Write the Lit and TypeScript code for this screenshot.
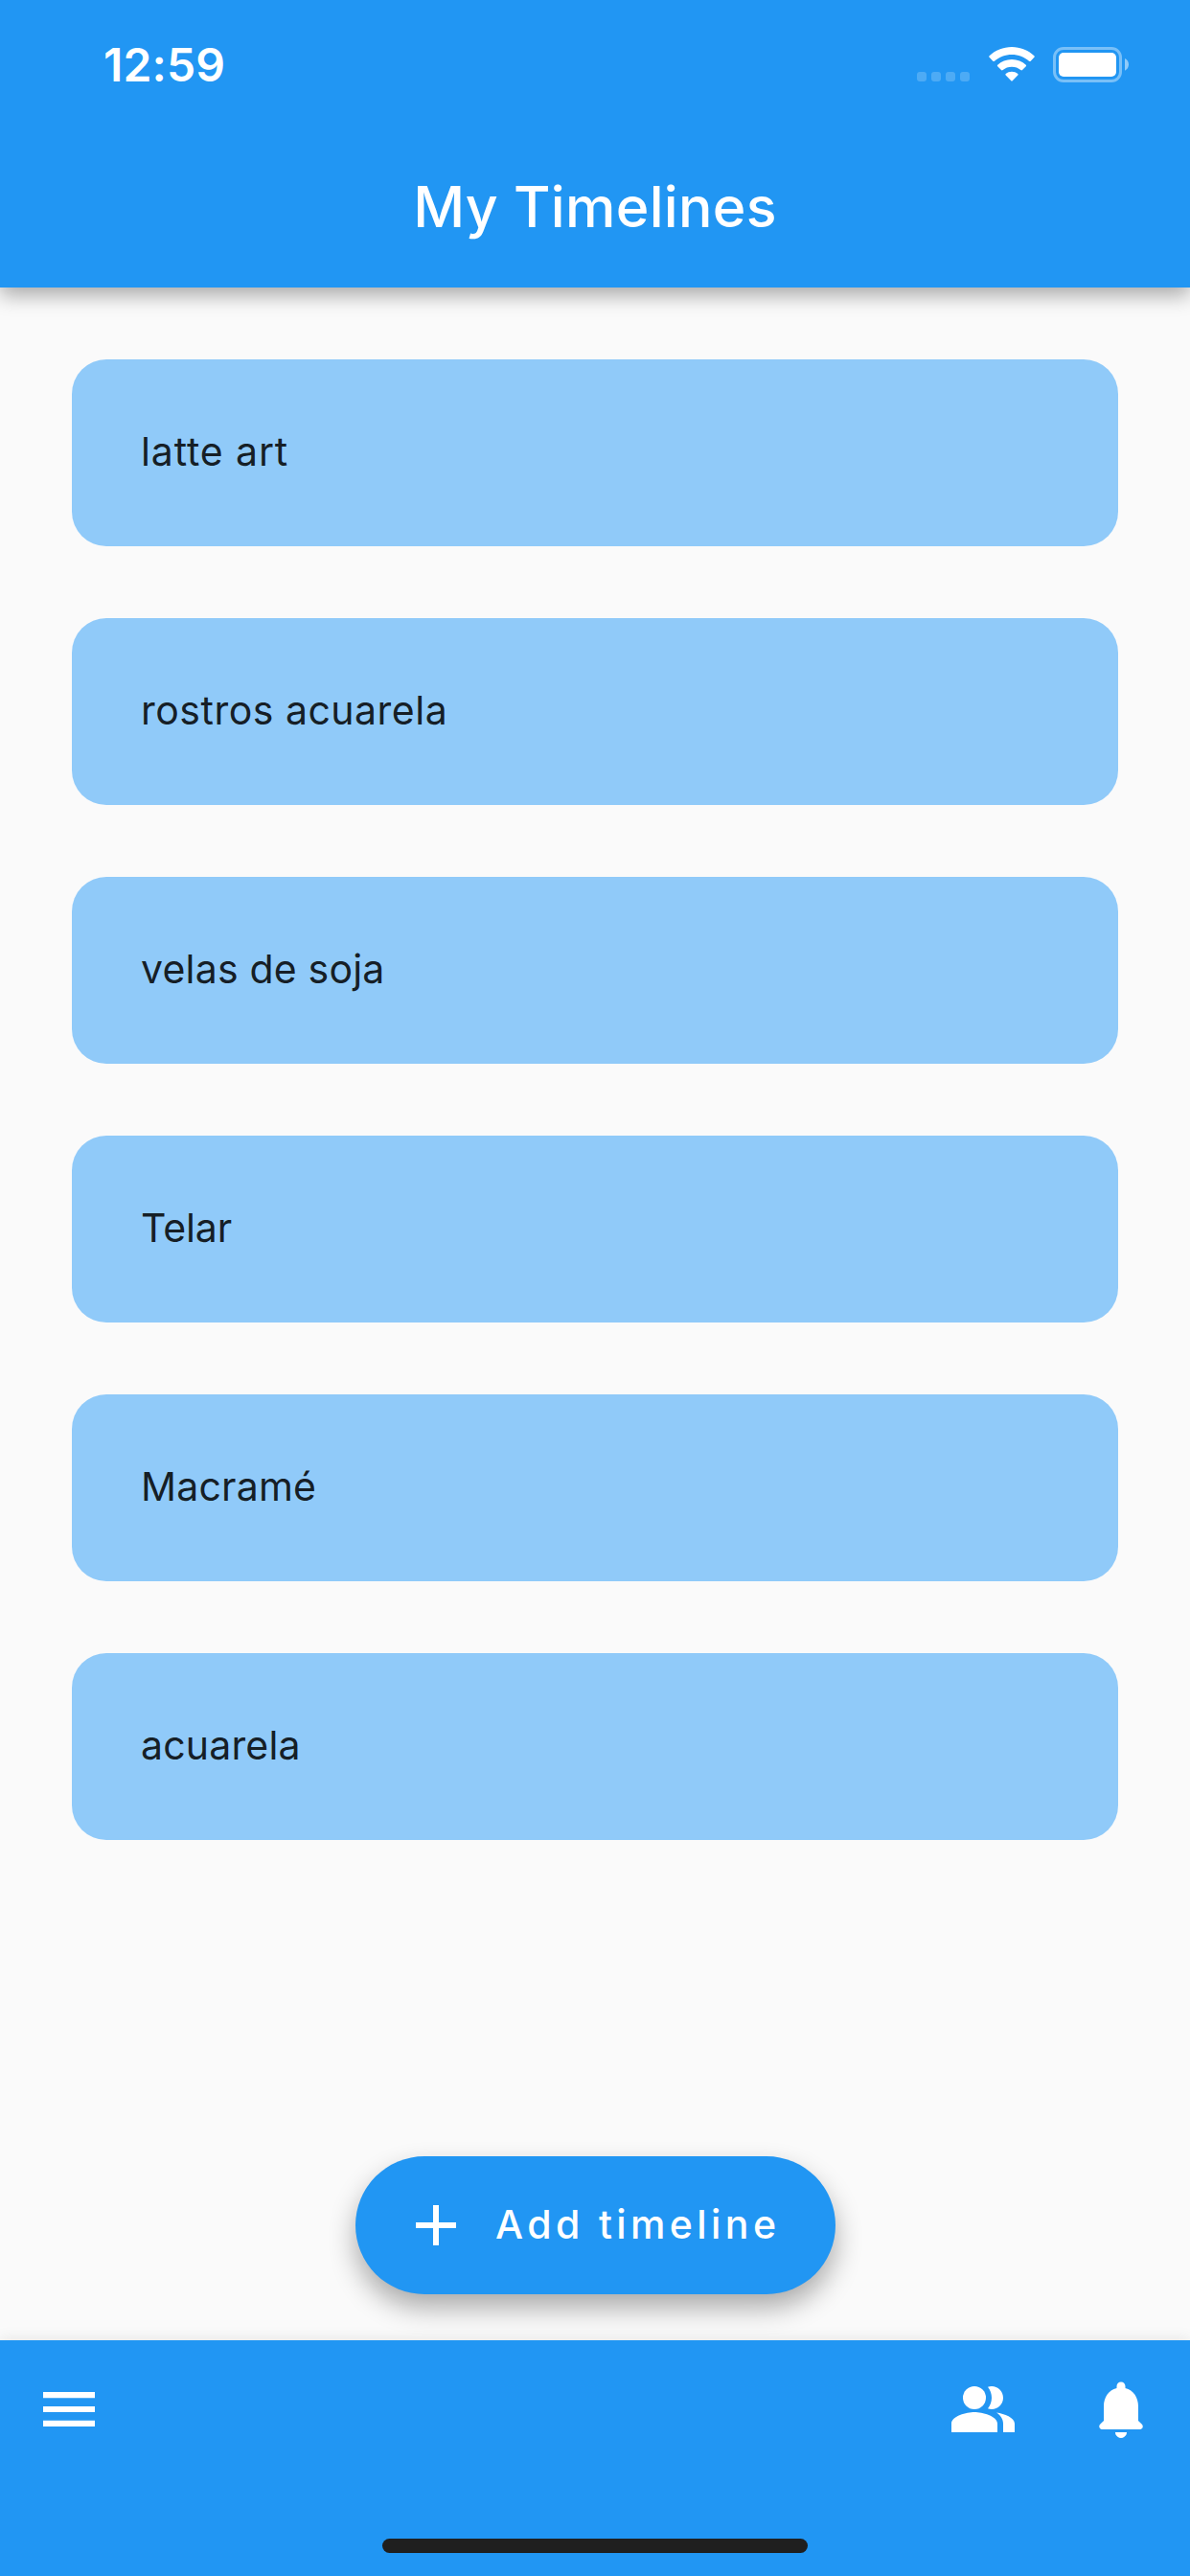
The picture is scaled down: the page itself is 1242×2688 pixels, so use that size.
import { LitElement, html, css, svg } from "lit";
import { customElement, property } from "lit/decorators.js";
import { styleMap } from "lit/directives/style-map.js";

interface Timeline {
  name: string;
  tracking: number;
}

const TIMELINES: Timeline[] = [
  { name: "latte art", tracking: 0.87 },
  { name: "rostros acuarela", tracking: 0.5 },
  { name: "velas de soja", tracking: 0.2 },
  { name: "Telar", tracking: -0.1 },
  { name: "Macramé", tracking: 0.2 },
  { name: "acuarela", tracking: 0.17 },
];

const ICONS = {
  add: svg`<path d="M19 13h-6v6h-2v-6H5v-2h6V5h2v6h6v2z"/>`,
  menu: svg`<path d="M3 18h18v-2.1H3V18zm0-5h18v-2H3v2zm0-7v2.1h18V6H3z"/>`,
  people: svg`<path d="M16.67 13.13C18.04 14.06 19 15.32 19 17v3h4v-3c0-2.18-3.57-3.47-6.33-3.87z"/><circle cx="9" cy="8" r="4"/><path d="M15 12c2.21 0 4-1.79 4-4s-1.79-4-4-4c-.47 0-.91.1-1.33.24C14.5 5.27 15 6.58 15 8s-.5 2.73-1.33 3.76c.42.14.86.24 1.33.24zM9 13c-2.67 0-8 1.34-8 4v3h16v-3c0-2.66-5.33-4-8-4z"/>`,
  bell: svg`<path d="M12 22c1.1 0 2-.9 2-2h-4c0 1.1.89 2 2 2zm6-6v-5c0-3.07-1.64-5.64-4.5-6.32V4c0-.83-.67-1.5-1.5-1.5s-1.5.67-1.5 1.5v.68C7.63 5.36 6 7.92 6 11v5l-1.29 1.29c-.63.63-.19 1.71.7 1.71h13.17c.89 0 1.34-1.08.71-1.71L18 16z"/>`,
};

@customElement("app-icon")
class AppIcon extends LitElement {
  @property() name: keyof typeof ICONS = "add";

  static styles = css`
    :host {
      display: block;
      width: 72px;
      height: 72px;
      flex: none;
    }
    .glyph {
      display: block;
      width: 100%;
      height: 100%;
      fill: currentColor;
    }
  `;

  render() {
    return html`<svg class="glyph" viewBox="0 0 24 24" aria-hidden="true">${ICONS[this.name]}</svg>`;
  }
}

@customElement("status-bar")
class StatusBar extends LitElement {
  static styles = css`
    :host {
      display: flex;
      box-sizing: border-box;
      height: 132px;
      padding: 0 62px 0 108px;
      align-items: center;
      justify-content: space-between;
      color: #fff;
    }
    .time {
      padding-top: 3px;
      font-size: 48px;
      font-weight: 600;
      line-height: 60px;
      letter-spacing: 0.15px;
    }
    .indicators {
      display: flex;
      align-items: center;
      padding-top: 3px;
    }
    .dots {
      display: flex;
      gap: 5px;
      margin: 25px 20px 0 0;
    }
    .dot {
      width: 10px;
      height: 10px;
      border-radius: 3px;
      background: rgba(255, 255, 255, 0.2);
    }
    .wifi {
      display: block;
      margin: 0 19px 1px 0;
    }
    .battery {
      display: block;
    }
  `;

  render() {
    return html`
      <span class="time">12:59</span>
      <div class="indicators">
        <div class="dots">
          ${[0, 1, 2, 3].map(() => html`<span class="dot"></span>`)}
        </div>
        <svg class="wifi" width="48" height="36" viewBox="0 0 48 36" fill="#fff">
          <path d="M24 0C33 0 41.200 3.500 47.400 9.200Q48.200 10 47.400 10.800L43.700 14.700Q42.900 15.500 42 14.700C37.200 10.400 30.900 7.900 24 7.900S10.800 10.400 6 14.700Q5.100 15.500 4.300 14.700L.6 10.800Q-.2 10 .6 9.200C6.800 3.500 15 0 24 0Z"/>
          <path d="M24 13C29.700 13 34.900 15.200 38.800 18.700Q39.600 19.500 38.800 20.300L35 24.100Q34.200 24.900 33.300 24.100C30.800 22 27.600 20.800 24 20.800S17.200 22 14.700 24.100Q13.800 24.900 13 24.100L9.200 20.300Q8.400 19.500 9.200 18.700C13.100 15.200 18.300 13 24 13Z"/>
          <path d="M24 25.800C26.300 25.800 28.500 26.600 30.300 27.900Q31.100 28.600 30.300 29.400L24.700 35.300Q24 36 23.300 35.300L17.700 29.400Q16.900 28.600 17.700 27.900C19.500 26.600 21.700 25.800 24 25.800Z"/>
        </svg>
        <svg class="battery" width="81" height="37" viewBox="0 0 81 37">
          <rect x="1.500" y="1.500" width="69" height="34" rx="9.500" fill="none" stroke="#fff" stroke-opacity=".4" stroke-width="3"/>
          <rect x="6" y="6" width="60" height="25" rx="5" fill="#fff"/>
          <path d="M75 12c2.400 1 4 3.500 4 6.300s-1.600 5.400-4 6.400z" fill="#fff" fill-opacity=".5"/>
        </svg>
      </div>
    `;
  }
}

@customElement("timeline-card")
class TimelineCard extends LitElement {
  @property({ attribute: false }) timeline!: Timeline;

  static styles = css`
    :host {
      display: flex;
      box-sizing: border-box;
      height: 195px;
      padding: 0 72px 3px;
      align-items: center;
      border-radius: 36px;
      background: #90caf9;
    }
    .name {
      font-size: 41px;
      line-height: 60px;
      color: rgba(0, 0, 0, 0.87);
    }
  `;

  render() {
    const { name, tracking } = this.timeline;
    return html`<span class="name" style=${styleMap({ letterSpacing: `${tracking}px` })}>${name}</span>`;
  }
}

@customElement("app-root")
class AppRoot extends LitElement {
  static styles = css`
    :host {
      display: flex;
      flex-direction: column;
      height: 2688px;
      overflow: hidden;
      background: #fafafa;
      font-family: Inter, "Liberation Sans", sans-serif;
    }
    .header {
      flex: none;
      height: 300px;
      background: #2196f3;
      box-shadow: 0 8px 20px rgba(0, 0, 0, 0.33);
    }
    .title {
      margin: 0;
      padding-bottom: 1px;
      text-align: center;
      font-size: 59px;
      font-weight: 500;
      line-height: 167px;
      letter-spacing: 0.3px;
      color: #fff;
    }
    .list {
      flex: 1;
      display: flex;
      flex-direction: column;
      gap: 75px;
      padding: 75px 75px 0;
    }
    .actions {
      flex: none;
      display: flex;
      justify-content: center;
      padding: 0 0 48px 1px;
    }
    .add {
      display: flex;
      align-items: center;
      box-sizing: border-box;
      width: 501px;
      height: 144px;
      margin: 0;
      padding: 0 0 0 48px;
      gap: 26px;
      border: 0;
      border-radius: 72px;
      background: #2196f3;
      box-shadow: 0 14px 28px rgba(0, 0, 0, 0.32);
      font: inherit;
      color: #fff;
    }
    .add-label {
      padding-bottom: 2px;
      font-size: 41px;
      font-weight: 500;
      line-height: 60px;
      letter-spacing: 4.4px;
      white-space: nowrap;
    }
    .footer {
      flex: none;
      display: flex;
      flex-direction: column;
      align-items: center;
      justify-content: space-between;
      box-sizing: border-box;
      height: 246px;
      padding: 36px 36px 24px;
      background: #2196f3;
      box-shadow: 0 -2px 14px rgba(0, 0, 0, 0.08);
      color: #fff;
    }
    .nav {
      display: flex;
      align-self: stretch;
      justify-content: space-between;
    }
    .nav-end {
      display: flex;
      gap: 72px;
    }
    .home-indicator {
      width: 444px;
      height: 15px;
      border-radius: 8px;
      background: #1f1f1f;
    }
  `;

  render() {
    return html`
      <header class="header">
        <status-bar></status-bar>
        <h1 class="title">My Timelines</h1>
      </header>
      <main class="list">
        ${TIMELINES.map((t) => html`<timeline-card .timeline=${t}></timeline-card>`)}
      </main>
      <div class="actions">
        <button class="add">
          <app-icon name="add"></app-icon>
          <span class="add-label">Add timeline</span>
        </button>
      </div>
      <footer class="footer">
        <nav class="nav">
          <app-icon name="menu"></app-icon>
          <div class="nav-end">
            <app-icon name="people"></app-icon>
            <app-icon name="bell"></app-icon>
          </div>
        </nav>
        <div class="home-indicator"></div>
      </footer>
    `;
  }
}
